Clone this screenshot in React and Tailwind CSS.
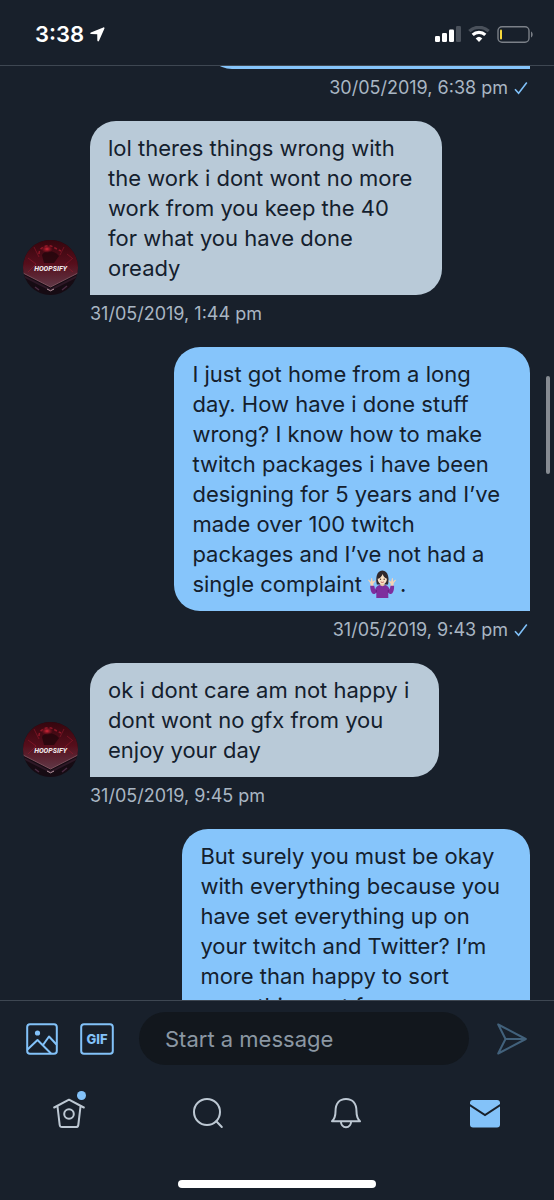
import React from "react";

const messages = [
  {
    id: 1,
    mine: false,
    lines: [
      "lol theres things wrong with",
      "the work i dont wont no more",
      "work from you keep the 40",
      "for what you have done",
      "oready",
    ],
    time: "31/05/2019, 1:44 pm",
  },
  {
    id: 2,
    mine: true,
    lines: [
      "I just got home from a long",
      "day. How have i done stuff",
      "wrong? I know how to make",
      "twitch packages i have been",
      "designing for 5 years and I’ve",
      "made over 100 twitch",
      "packages and I’ve not had a",
      <>
        single complaint <ShrugEmoji />.
      </>,
    ],
    time: "31/05/2019, 9:43 pm",
  },
  {
    id: 3,
    mine: false,
    lines: ["ok i dont care am not happy i", "dont wont no gfx from you", "enjoy your day"],
    time: "31/05/2019, 9:45 pm",
  },
  {
    id: 4,
    mine: true,
    lines: [
      "But surely you must be okay",
      "with everything because you",
      "have set everything up on",
      "your twitch and Twitter? I’m",
      "more than happy to sort",
      "something out for you",
    ],
    time: "31/05/2019, 9:47 pm",
  },
];

function ShrugEmoji() {
  return (
    <svg role="img" aria-label="Woman shrugging" viewBox="0 0 28 28" className="mr-1 inline-block size-7 align-[-6px]">
      <path d="M8.800 14.500C7.500 9 8.300.5 14.300.5c6.200 0 7 8.500 5.700 14Z" fill="#30292d" />
      <path d="M12.200 12h4.300v4.500l-2.200 1.500-2.100-1.500Z" fill="#e6bf9e" />
      <ellipse cx="14.300" cy="9" rx="4.600" ry="5.400" fill="#f7dfc4" />
      <path d="M9.500 9c2.900-.8 4.500-2.800 5.100-5 .6 2.300 2.100 3.900 4.500 4.800.2-4.500-1.500-7-4.800-7-3.500 0-5 3-4.800 7.200Z" fill="#30292d" />
      <circle cx="12.500" cy="9.200" r=".7" fill="#493128" />
      <circle cx="16.200" cy="9.200" r=".7" fill="#493128" />
      <path d="M12.700 11.900q1.600 1.200 3.200 0" fill="none" stroke="#b84a49" strokeWidth=".8" />
      <path d="M3 17.500 2.200 13 .3 10.600c-.4-.8.3-1.100.9-.5L3 11.800 3 8.500c.1-.8.9-.8 1.100 0l.7 3.300 1.600-1.200c.8-.4 1.200.2.7.8l-1.800 2.400.4 4.200ZM25.200 17.500l.6-4.500 2-2.400c.3-.8-.4-1.100-1-.5L25 11.800V8.500c-.1-.8-.9-.8-1.100 0l-.7 3.300-1.600-1.200c-.8-.4-1.200.2-.7.8l1.800 2.400-.4 4.200Z" fill="#f3d3b5" />
      <path d="M2.200 15.800h4l.9 3.700c1-2.600 2.300-4.100 4.700-4.500 1.700 1.500 3.500 1.500 5.200 0 2.400.4 3.700 2 4.700 4.500l.8-3.700h3.600c.1 3.900-.9 8-3.300 8.200-1.200.1-2-.7-2.500-1.600V28H8.300v-5.600c-.6.9-1.300 1.700-2.500 1.600-2.500-.2-3.600-4.300-3.600-8.200Z" fill="#7e2e9e" />
      <path d="M8.300 22.400V20M20.300 22.400V20" stroke="#5d1e7b" strokeWidth=".8" />
    </svg>
  );
}

function Avatar() {
  return (
    <svg role="img" aria-label="Hoopsify" viewBox="0 0 55 55" className="size-[55px] shrink-0 rounded-full">
      <defs>
        <linearGradient id="gem" x1="0" y1="0" x2="0" y2="1">
          <stop offset="0" stopColor="#35060e" />
          <stop offset=".5" stopColor="#560e1b" />
          <stop offset="1" stopColor="#603847" />
        </linearGradient>
        <radialGradient id="glow">
          <stop offset="0" stopColor="#e0283a" />
          <stop offset="1" stopColor="#8b1222" stopOpacity="0" />
        </radialGradient>
      </defs>
      <rect width="55" height="55" fill="#160b13" />
      <path d="M0 33V10L14 0h27l14 10v23L27.500 47Z" fill="url(#gem)" />
      <path d="M16 14c0-7 9-11 16-6l6 3" fill="none" stroke="#8d1727" strokeWidth="1.500" strokeDasharray="3 2" />
      <path d="M19 15c3-5 12-5 17 1l-5 7H21Z" fill="#1f060b" opacity=".75" />
      <ellipse cx="24" cy="9" rx="6" ry="4" fill="url(#glow)" />
      <path d="M5 18l8 6-8 8M50 18l-8 7 8 7M11 7l5 10M41 7l-4 8M44 14l5 4" fill="none" stroke="#a31d31" strokeWidth=".7" opacity=".7" />
      <path d="M0 33 27.500 47 55 33" fill="none" stroke="#7b4f5b" strokeWidth="1" />
      <path d="M0 36 27.500 50 55 36" fill="none" stroke="#2d1826" strokeWidth="2" />
      <path d="M24 49l3.500 1.800L31 49" fill="none" stroke="#b999a3" strokeWidth="1" />
      <path d="M12 47l4 3M39 50l5-4" stroke="#4a2b42" strokeWidth="1.500" />
      <text x="27.500" y="31" textAnchor="middle" className="fill-[#eee5e8] font-['Roboto'] text-[7px] font-extrabold italic">
        HOOPSIFY
      </text>
    </svg>
  );
}

function StatusBar() {
  return (
    <header className="flex h-[66px] shrink-0 items-center justify-between border-b border-[#3e4752] pt-[3px] pr-[21px] pl-[35px]">
      <div className="flex items-center gap-[6px]">
        <span className="text-[22px] leading-7 font-semibold text-white">3:38</span>
        <svg aria-hidden="true" viewBox="0 0 16 16" className="size-[15px] fill-white">
          <path d="M14.200.5.900 5.800C-.2 6.300 0 7.500 1.200 7.500l6.500.1.100 6.600c0 1.500 1.300 1.500 1.800.4L15.300 1.900C15.700.8 15.200.1 14.200.5Z" />
        </svg>
      </div>
      <div className="flex items-center gap-[7px]">
        <svg role="img" aria-label="Signal strength" viewBox="0 0 26 16" className="h-4 w-[26px] fill-white">
          <rect x="0" y="10" width="5" height="6" rx="1.200" />
          <rect x="7" y="7" width="5" height="9" rx="1.200" />
          <rect x="14" y="3.500" width="5" height="12.500" rx="1.200" />
          <rect x="21" y="0" width="5" height="16" rx="1.200" fill="#4a515b" />
        </svg>
        <svg role="img" aria-label="Wi-Fi" viewBox="0 0 22 16" className="h-4 w-[22px]">
          <path d="M1.300 5.200a14 14 0 0 1 19.400 0" fill="none" stroke="#4a515b" strokeWidth="3.200" />
          <path d="M4.700 8.900a9.200 9.200 0 0 1 12.600 0" fill="none" stroke="#fff" strokeWidth="3.200" />
          <path d="M7.700 12.400a4.800 4.800 0 0 1 6.600 0L11 16Z" fill="#fff" />
        </svg>
        <svg role="img" aria-label="Battery low" viewBox="0 0 36 17" className="h-[17px] w-9">
          <rect x="1" y=".8" width="31" height="15.400" rx="4" fill="none" stroke="#7b8088" strokeWidth="1.400" />
          <path d="M34 5.500c2.200.8 2.200 5.200 0 6Z" fill="#7b8088" />
          <rect x="3" y="3.500" width="2" height="10" rx="1" fill="#f8d93c" />
        </svg>
      </div>
    </header>
  );
}

function Timestamp({ mine, children }) {
  return (
    <div
      className={
        mine
          ? "mt-2 mb-[22px] flex items-center justify-end gap-[6px] text-lg leading-[22px] text-[#a9b6c3]"
          : "mt-2 mb-[22px] ml-[67px] text-lg leading-[22px] text-[#a9b6c3]"
      }
    >
      <time>{children}</time>
      {mine && (
        <svg role="img" aria-label="Sent" viewBox="0 0 14 14" className="mr-[2px] size-[14px]">
          <path d="M1 8.200 4.600 12.300 12.800 1.500" fill="none" stroke="#7fc0f8" strokeWidth="1.600" />
        </svg>
      )}
    </div>
  );
}

function Message({ mine, lines, time }) {
  return (
    <li>
      <div className={mine ? "flex justify-end" : "flex items-end gap-3"}>
        {!mine && <Avatar />}
        <p
          className={
            mine
              ? "rounded-[26px] rounded-br-none bg-[#86c5fb] py-3 pr-[30px] pl-[18px] text-[22px] leading-[30px] text-[#14202d]"
              : "rounded-[26px] rounded-bl-none bg-[#b9cad8] py-3 pr-[30px] pl-[18px] text-[22px] leading-[30px] text-[#14202d]"
          }
        >
          {lines.map((line, i) => (
            <span key={i} className="block whitespace-nowrap">
              {line}
            </span>
          ))}
        </p>
      </div>
      <Timestamp mine={mine}>{time}</Timestamp>
    </li>
  );
}

function Composer() {
  return (
    <form className="flex items-center pt-[11px] pr-[27px] pl-[26px]" onSubmit={(e) => e.preventDefault()}>
      <button type="button" aria-label="Add photo">
        <svg viewBox="0 0 32 32" className="size-8" fill="none" stroke="#83c2f9" strokeWidth="2" strokeLinejoin="round">
          <rect x="1.200" y="1.200" width="29.600" height="29.600" rx="2.800" />
          <circle cx="11.500" cy="10" r="2.600" fill="#83c2f9" stroke="none" />
          <path d="M1.500 26.500 11.500 17 25 30.500M17 22 23 13.500 30.500 21.500" />
        </svg>
      </button>
      <button type="button" aria-label="Add GIF" className="ml-[22px]">
        <svg viewBox="0 0 34 32" className="h-8 w-[34px]">
          <rect x="1.200" y="1.200" width="31.600" height="29.600" rx="2.800" fill="none" stroke="#83c2f9" strokeWidth="2" />
          <text x="17" y="21" textAnchor="middle" className="fill-[#83c2f9] font-['Inter'] text-[13px] font-extrabold">
            GIF
          </text>
        </svg>
      </button>
      <input
        type="text"
        aria-label="Start a message"
        placeholder="Start a message"
        className="ml-[25px] h-[53px] min-w-0 flex-1 rounded-full bg-[#12171d] px-[26px] text-[22px] text-white outline-none placeholder:text-[#8b97a3] placeholder:opacity-100"
      />
      <button type="submit" aria-label="Send" className="ml-7">
        <svg viewBox="0 0 30 32" className="h-8 w-[30px]" fill="none" stroke="#42617b" strokeWidth="2" strokeLinejoin="round">
          <path d="M1.200 1.500 28.800 16 1.200 30.500 8.500 16ZM8.500 16H28" />
        </svg>
      </button>
    </form>
  );
}

function TabBar() {
  return (
    <nav aria-label="Main" className="grid h-24 grid-cols-4 place-items-center">
      <a href="#home" aria-label="Home" className="relative">
        <svg viewBox="0 0 32 32" className="size-8" fill="none" stroke="#bdc8d3" strokeWidth="2" strokeLinecap="round" strokeLinejoin="round">
          <path d="M1.200 10.500 16 2.700 30.800 10.500M4.500 9.500l2.200 18.500c.2 1.500.9 2.100 2.300 2.100h14c1.400 0 2.100-.6 2.300-2.100L27.500 9.500" />
          <circle cx="16" cy="17" r="4.800" />
        </svg>
        <span className="absolute -top-[6px] -right-px size-[9px] rounded-full bg-[#83c2f9]" />
      </a>
      <a href="#search" aria-label="Search">
        <svg viewBox="0 0 32 32" className="size-8" fill="none" stroke="#bdc8d3" strokeWidth="2" strokeLinecap="round">
          <circle cx="15" cy="15" r="13" />
          <path d="m24.300 24.300 5.500 5.700" />
        </svg>
      </a>
      <a href="#notifications" aria-label="Notifications">
        <svg viewBox="0 0 32 32" className="size-8" fill="none" stroke="#bdc8d3" strokeWidth="2" strokeLinejoin="round">
          <path d="M2 24.200c2.700-2.500 3.500-5 3.500-9.700C5.500 6.500 9.500 2 16 2s10.500 4.500 10.500 12.500c0 4.700.8 7.200 3.500 9.700ZM10.800 24.500c.4 3.700 2.400 5.700 5.200 5.700s4.800-2 5.200-5.700" />
        </svg>
      </a>
      <a href="#messages" aria-label="Messages" aria-current="page">
        <svg viewBox="0 0 32 32" className="size-8">
          <rect x="1" y="3" width="30" height="27.500" rx="3" fill="#83c2f9" />
          <path d="M0 7.500 16 18 32 7.500" fill="none" stroke="#18202b" strokeWidth="2" />
        </svg>
      </a>
    </nav>
  );
}

export default function App() {
  return (
    <div className="flex h-screen flex-col overflow-hidden bg-[#18202b] font-['Inter','Liberation_Sans',sans-serif]">
      <StatusBar />
      <main className="relative min-h-0 flex-1 overflow-hidden pr-6 pl-[23px]">
        <div className="-mt-[50px] ml-auto h-[53px] w-[324px] rounded-[26px] rounded-br-none bg-[#86c5fb]" />
        <Timestamp mine>30/05/2019, 6:38 pm</Timestamp>
        <ul>
          {messages.map((m) => (
            <Message key={m.id} {...m} />
          ))}
        </ul>
        <div className="absolute top-[310px] right-1 h-[98px] w-1 rounded-full bg-[#868b92]" />
      </main>
      <footer className="shrink-0 border-t border-[#3e4752] pb-3">
        <Composer />
        <TabBar />
        <div className="mx-auto mt-[19px] h-2 w-[198px] rounded-full bg-white" />
      </footer>
    </div>
  );
}
